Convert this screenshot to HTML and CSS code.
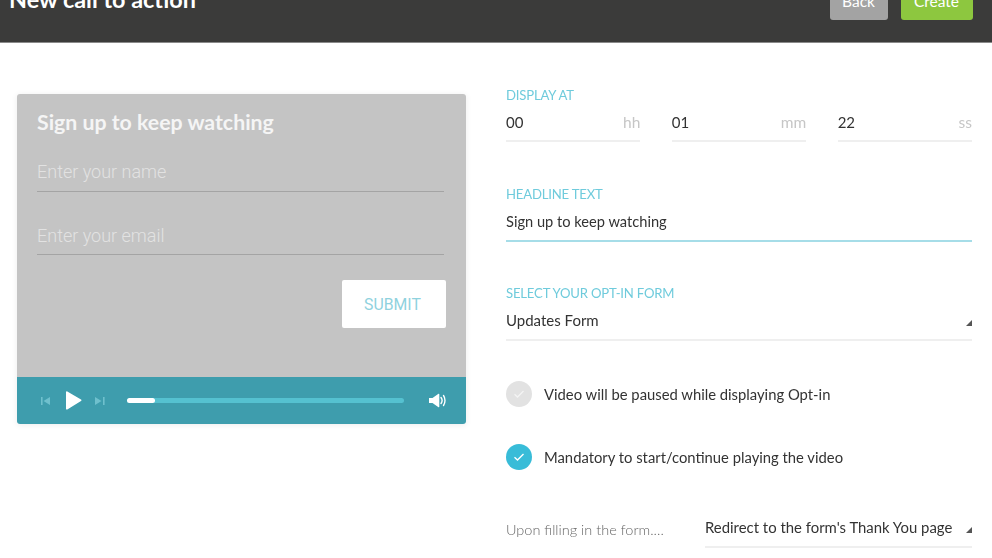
FILE: index.html
```html
<!DOCTYPE html>
<html lang="en">
<head>
<meta charset="utf-8">
<title>New call to action</title>
<link rel="stylesheet" href="styles.css">
</head>
<body>
<header class="topbar">
  <h1 class="title">New call to action</h1>
  <div class="actions">
    <button class="btn btn-back">Back</button>
    <button class="btn btn-create">Create</button>
  </div>
</header>
<main class="content">
  <section class="player">
    <div class="optin">
      <h2 class="optin-title">Sign up to keep watching</h2>
      <div class="optin-input">Enter your name</div>
      <div class="optin-input">Enter your email</div>
      <div class="optin-actions"><button class="submit">SUBMIT</button></div>
    </div>
    <div class="controls">
      <svg class="ctl-skip" width="11" height="8" viewBox="0 0 11 8"><rect x="1" y="0" width="1.6" height="8" fill="#6fc0cd"/><path d="M10 0v8L3.500 4z" fill="#6fc0cd"/></svg>
      <svg class="ctl-play" width="17" height="19" viewBox="0 0 17 19"><path d="M1 1.200c0-.8.700-1.100 1.300-.7L16 8.500c.6.400.6 1.200 0 1.600L2.300 18.400c-.6.400-1.300.1-1.300-.7z" fill="#fff"/></svg>
      <svg class="ctl-skip" width="13" height="8" viewBox="0 0 13 8"><path d="M2 0v8l6.500-4z" fill="#6fc0cd"/><rect x="10" y="0" width="1.600" height="8" fill="#6fc0cd"/></svg>
      <div class="track"><div class="track-fill"></div></div>
      <svg class="ctl-vol" width="18" height="15" viewBox="0 0 18 15"><path d="M0 5h3.500L9.500.8c.4-.3.800 0 .8.400v12.600c0 .4-.4.700-.8.400L3.500 10H0z" fill="#fff"/><path d="M12 4.500c1.200 1.600 1.200 4.400 0 6M14.500 2.500c2 2.800 2 7.200 0 10" fill="none" stroke="#fff" stroke-width="1.400" stroke-linecap="round"/></svg>
    </div>
  </section>
  <section class="form">
    <div class="group group-time">
      <div class="label">DISPLAY AT</div>
      <div class="time-row">
        <div class="time-field"><span class="value">00</span><span class="unit">hh</span></div>
        <div class="time-field"><span class="value">01</span><span class="unit">mm</span></div>
        <div class="time-field"><span class="value">22</span><span class="unit">ss</span></div>
      </div>
    </div>
    <div class="group group-headline">
      <div class="label">HEADLINE TEXT</div>
      <div class="field field-active"><span class="value value-headline">Sign up to keep watching</span></div>
    </div>
    <div class="group group-select">
      <div class="label">SELECT YOUR OPT-IN FORM</div>
      <div class="field"><span class="value">Updates Form</span><span class="caret"></span></div>
    </div>
    <div class="check-row check-first">
      <span class="check check-off"><svg width="12" height="10" viewBox="0 0 12 10"><path d="M1.500 5.200 4.500 8l6-6" fill="none" stroke="#f4f4f4" stroke-width="1.300"/></svg></span>
      <span class="check-text">Video will be paused while displaying Opt-in</span>
    </div>
    <div class="check-row check-second">
      <span class="check check-on"><svg width="12" height="10" viewBox="0 0 12 10"><path d="M1.500 5.200 4.500 8l6-6" fill="none" stroke="#fff" stroke-width="1.400"/></svg></span>
      <span class="check-text">Mandatory to start/continue playing the video</span>
    </div>
    <div class="after-row">
      <span class="after-label">Upon filling in the form....</span>
      <div class="field after-field"><span class="value value-redirect">Redirect to the form's Thank You page</span><span class="caret"></span></div>
    </div>
  </section>
</main>
</body>
</html>
```
FILE: styles.css
```css
* { box-sizing: border-box; }
html, body { margin: 0; padding: 0; }
body {
  width: 992px;
  height: 558px;
  overflow: hidden;
  background: #fff;
  font-family: Lato, "Open Sans", sans-serif;
  color: #333;
  filter: blur(.45px);
}
.topbar {
  height: 43px;
  background: #3b3b3a;
  border-bottom: 1px solid #8a8a8a;
  display: flex;
  justify-content: space-between;
  align-items: flex-end;
  padding: 0 19.5px 22px 9px;
  overflow: hidden;
}
.title {
  margin: 0 0 9px;
  font-size: 23.400px;
  line-height: 24px;
  font-weight: 700;
  color: #fff;
}
.actions { display: flex; gap: 13px; }
.btn {
  border: 0;
  border-radius: 3px;
  height: 38px;
  padding: 0;
  font-family: inherit;
  font-size: 15.500px;
  color: #fff;
}
.btn-back { width: 58px; background: #a3a3a3; }
.btn-create { width: 72px; background: #8dc73f; }
.content {
  display: flex;
  gap: 40px;
  padding: 44px 20px 0 17px;
  align-items: flex-start;
}
.player {
  width: 449px;
  height: 330px;
  margin-top: 7px;
  border-radius: 3px;
  overflow: hidden;
  display: flex;
  flex-direction: column;
  box-shadow: 0 1px 6px rgba(0, 0, 0, .08);
}
.optin {
  flex: 1;
  background: #c4c4c4;
  padding: 16px 20px 0 20px;
}
.optin-title {
  margin: 0 0 22px;
  font-size: 21.300px;
  line-height: 24px;
  font-weight: 700;
  color: #f5f5f5;
}
.optin-input {
  height: 35.500px;
  margin: 0 2px 28px 0;
  border-bottom: 1.500px solid #a4a4a4;
  font-family: Roboto, sans-serif;
  font-size: 18px;
  font-weight: 300;
  line-height: 24px;
  padding-top: 4px;
  color: #e2e2e2;
}
.optin-actions { display: flex; justify-content: flex-end; margin-top: -3px; }
.submit {
  width: 104px;
  height: 48px;
  border: 0;
  border-radius: 2px;
  background: #fff;
  padding: 0 3px 0 0;
  font-family: Roboto, sans-serif;
  font-size: 15.800px;
  font-weight: 400;
  color: #8fd2de;
}
.controls {
  height: 47px;
  background: #3e9dad;
  display: flex;
  align-items: center;
  padding: 0 19px 0 23px;
}
.ctl-skip { flex: none; }
.ctl-play { flex: none; margin: 0 11px 0 14px; }
.track {
  flex: 1;
  height: 5px;
  margin: 0 25px 0 21px;
  border-radius: 3px;
  background: #55c1d0;
}
.track-fill { width: 28px; height: 100%; border-radius: 3px; background: #fff; }
.ctl-vol { flex: none; }
.form { width: 466px; }
.label {
  font-size: 13.150px;
  line-height: 16px;
  letter-spacing: -.2px;
  color: #6fcbdc;
}
.value { font-size: 15px; line-height: 20px; color: #333; }
.value-headline { font-size: 14.650px; }
.value-redirect { font-size: 14.900px; }
.group-time .label { margin-bottom: 8px; }
.time-row { display: flex; gap: 31.500px; }
.time-field {
  flex: 1;
  height: 31px;
  display: flex;
  justify-content: space-between;
  align-items: flex-start;
  padding: 1px 0 0 0;
  border-bottom: 2px solid #efefef;
}
.unit { font-size: 15.500px; line-height: 20px; color: #c6c6c6; }
.group-headline { margin-top: 44px; }
.group-headline .field { height: 40px; padding-top: 10px; }
.group-select { margin-top: 43px; }
.group-select .field { height: 40px; padding-top: 9px; }
.field {
  display: flex;
  align-items: flex-start;
  justify-content: space-between;
  border-bottom: 2px solid #efefef;
}
.field-active { border-bottom-color: #a6dde8; }
.caret {
  width: 0;
  height: 0;
  margin-top: 10px;
  border-style: solid;
  border-width: 0 0 6px 6px;
  border-color: transparent transparent #555 transparent;
}
.check-row { display: flex; align-items: center; gap: 12px; }
.check-first { margin-top: 40px; }
.check-second { margin-top: 37px; }
.check {
  width: 26px;
  height: 26px;
  border-radius: 50%;
  display: flex;
  align-items: center;
  justify-content: center;
  flex: none;
}
.check-off { background: #e2e2e2; }
.check-on { background: #38bcd8; }
.check-text { font-size: 14.800px; line-height: 20px; color: #333; }
.after-row { display: flex; justify-content: space-between; align-items: flex-start; margin-top: 47px; }
.after-label { margin-top: 3px; font-size: 14.500px; line-height: 20px; font-weight: 300; color: #666; }
.after-field { width: 267px; height: 31px; padding-top: 0; }
```
